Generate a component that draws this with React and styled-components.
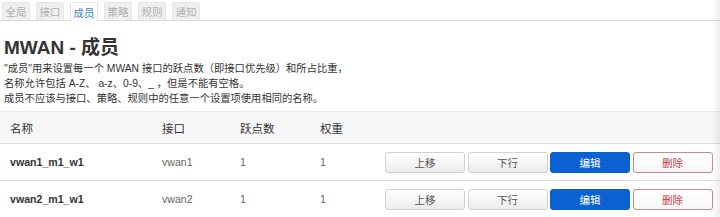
import React from "react";
import styled, { createGlobalStyle } from "styled-components";

const Global = createGlobalStyle`
  html, body { margin: 0; padding: 0; background: #fff; }
  body { font-family: "Liberation Sans", "Noto Sans CJK SC", sans-serif; color: #333; }
`;

const Page = styled.div`
  position: relative;
  width: 720px;
  height: 217px;
  overflow: hidden;
  &::after {
    content: "";
    position: absolute;
    top: 0;
    right: 0;
    width: 8px;
    height: 100%;
    background: linear-gradient(to right, rgba(0,0,0,0), rgba(0,0,0,0.07));
    pointer-events: none;
  }
`;

const TabBar = styled.div`
  display: flex;
  gap: 6px;
  padding: 2px 0 0 2px;
  height: 18px;
  border-bottom: 1px solid #dcdcdc;
`;

const Tab = styled.div`
  width: 28px;
  box-sizing: border-box;
  display: flex;
  align-items: center;
  justify-content: center;
  font-size: 10.5px;
  border: 1px solid ${p => (p.$active ? "#e2e2e2" : "#e6e6e6")};
  border-bottom: none;
  background: ${p => (p.$active ? "#fff" : "#efefef")};
  color: ${p => (p.$active ? "#3a87c8" : "#b0b0b0")};
  border-radius: 2px 2px 0 0;
  margin-bottom: ${p => (p.$active ? "-1px" : "0")};
  height: ${p => (p.$active ? "19px" : "18px")};
`;

const Title = styled.h2`
  margin: 16px 0 0 4px;
  font-size: 19px;
  line-height: 22px;
  font-weight: bold;
  color: #333;
`;

const Desc = styled.div`
  margin: 1.5px 0 0 4px;
  font-size: 10.3px;
  line-height: 15px;
  color: #333;
`;

const Table = styled.div`
  margin-top: 5.5px;
  border-top: 1px solid #ececec;
`;

const Row = styled.div`
  display: grid;
  grid-template-columns: 152px 78px 80px 75px 1fr;
  align-items: center;
  height: ${p => (p.$head ? "31px" : "36px")};
  background: ${p => (p.$head ? "#f7f7f7" : "#fff")};
  border-bottom: 1px solid #dedede;
  font-size: ${p => (p.$head ? "11.5px" : "10.6px")};
`;

const Cell = styled.div`
  padding-left: 10px;
  color: ${p => (p.$head || p.$bold ? "#333" : "#666")};
  font-weight: ${p => (p.$bold ? "bold" : "normal")};
`;

const Actions = styled.div`
  display: flex;
  gap: 2.5px;
`;

const Btn = styled.button`
  width: 80px;
  height: 21px;
  box-sizing: border-box;
  border-radius: 3px;
  font-family: inherit;
  font-size: 10.5px;
  padding: 0;
  cursor: pointer;
  border: 1px solid ${p =>
    p.$kind === "primary" ? "#0b5fc4" : p.$kind === "danger" ? "#c98a8a" : "#d0d0d0"};
  background: ${p =>
    p.$kind === "primary"
      ? "#0a62d4"
      : p.$kind === "danger"
      ? "linear-gradient(#ffffff, #f7f7f7)"
      : "linear-gradient(#ffffff, #ececec)"};
  color: ${p =>
    p.$kind === "primary" ? "#fff" : p.$kind === "danger" ? "#c0444a" : "#555"};
`;

const rows = [
  { name: "vwan1_m1_w1", iface: "vwan1", metric: "1", weight: "1" },
  { name: "vwan2_m1_w1", iface: "vwan2", metric: "1", weight: "1" },
];

export default function App() {
  const tabs = ["全局", "接口", "成员", "策略", "规则", "通知"];
  return (
    <Page>
      <Global />
      <TabBar>
        {tabs.map(t => (
          <Tab key={t} $active={t === "成员"}>{t}</Tab>
        ))}
      </TabBar>
      <Title>MWAN - 成员</Title>
      <Desc>
        "成员"用来设置每一个 MWAN 接口的跃点数（即接口优先级）和所占比重，<br />
        名称允许包括 A-Z、 a-z、0-9、_ ，但是不能有空格。<br />
        成员不应该与接口、策略、规则中的任意一个设置项使用相同的名称。
      </Desc>
      <Table>
        <Row $head>
          <Cell $head>名称</Cell>
          <Cell $head>接口</Cell>
          <Cell $head>跃点数</Cell>
          <Cell $head>权重</Cell>
          <div />
        </Row>
        {rows.map(r => (
          <Row key={r.name}>
            <Cell $bold>{r.name}</Cell>
            <Cell>{r.iface}</Cell>
            <Cell>{r.metric}</Cell>
            <Cell>{r.weight}</Cell>
            <Actions>
              <Btn>上移</Btn>
              <Btn>下行</Btn>
              <Btn $kind="primary">编辑</Btn>
              <Btn $kind="danger">删除</Btn>
            </Actions>
          </Row>
        ))}
      </Table>
    </Page>
  );
}
